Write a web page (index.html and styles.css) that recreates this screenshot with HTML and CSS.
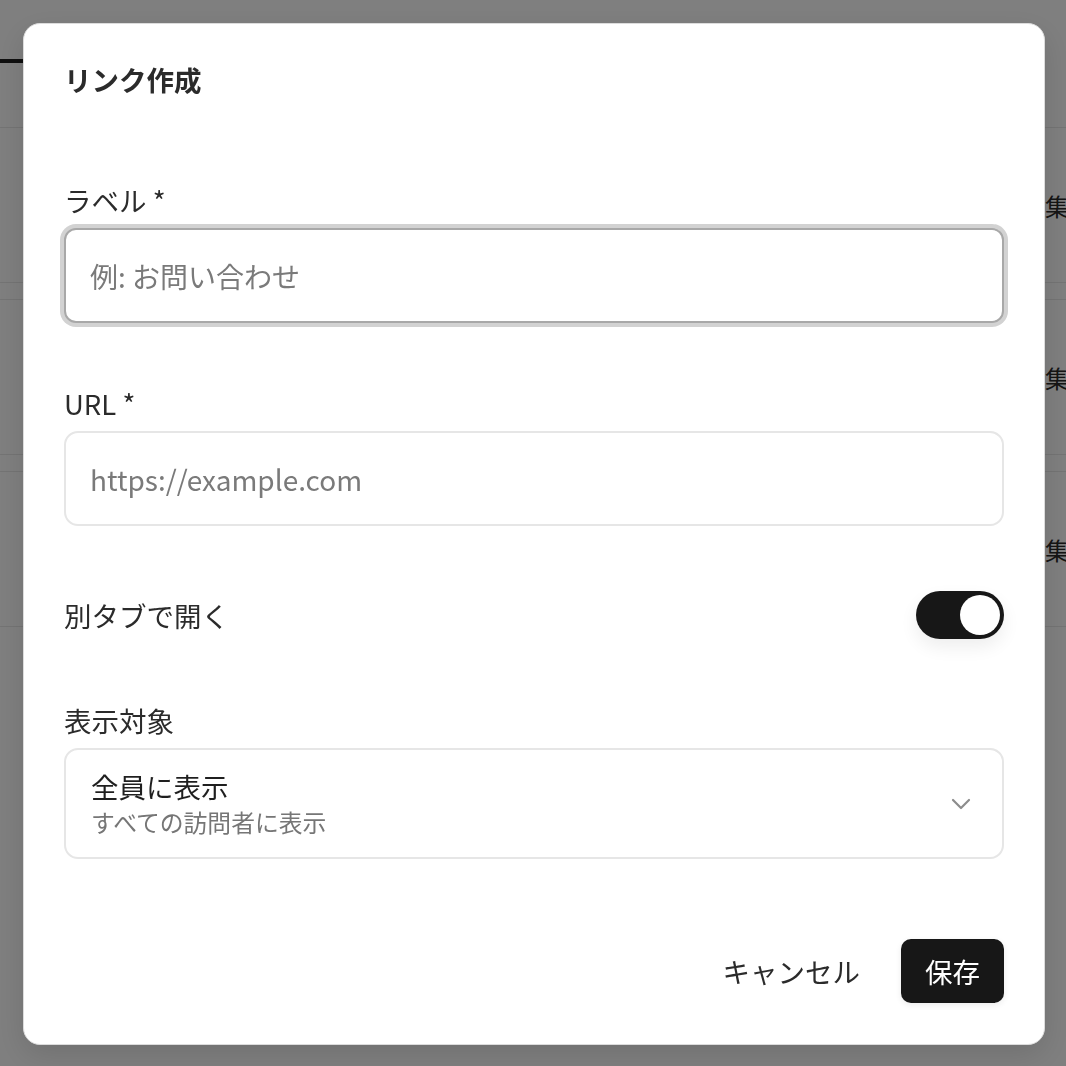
FILE: index.html
```html
<!DOCTYPE html>
<html lang="ja">
<head>
<meta charset="utf-8">
<title>リンク作成</title>
<link rel="stylesheet" href="styles.css">
</head>
<body>
<div class="page">
  <div class="page-header">
    <div class="tab-active"></div>
  </div>
  <div class="rows">
    <div class="row"><span class="row-action">編集</span></div>
    <div class="row"><span class="row-action">編集</span></div>
    <div class="row"><span class="row-action">編集</span></div>
  </div>
</div>

<div class="overlay">
  <div class="modal" role="dialog" aria-labelledby="modal-title">
    <h2 class="modal-title" id="modal-title">リンク作成</h2>
    <form class="form">
      <div class="field field-first">
        <label class="field-label" for="label">ラベル *</label>
        <input class="input input-focus" id="label" type="text" placeholder="例: お問い合わせ">
      </div>
      <div class="field">
        <label class="field-label" for="url">URL *</label>
        <input class="input" id="url" type="text" placeholder="https://example.com">
      </div>
      <div class="toggle-row">
        <span class="toggle-label">別タブで開く</span>
        <span class="toggle"><span class="toggle-knob"></span></span>
      </div>
      <div class="field">
        <span class="field-label">表示対象</span>
        <div class="select">
          <div class="select-text">
            <span class="select-main">全員に表示</span>
            <span class="select-sub">すべての訪問者に表示</span>
          </div>
          <svg class="chevron" width="20" height="12" viewBox="0 0 20 12" fill="none">
            <path d="M2 2 L10 10 L18 2" stroke="#8c8c8c" stroke-width="2.2" stroke-linecap="round" stroke-linejoin="round"/>
          </svg>
        </div>
      </div>
      <div class="footer">
        <button type="button" class="btn btn-ghost">キャンセル</button>
        <button type="button" class="btn btn-primary">保存</button>
      </div>
    </form>
  </div>
</div>
</body>
</html>
```
FILE: styles.css
```css
* { box-sizing: border-box; }

html, body {
  margin: 0;
  padding: 0;
  width: 1066px;
  height: 1066px;
  overflow: hidden;
  font-family: "Noto Sans CJK JP", "Noto Sans", sans-serif;
  color: #1a1a1a;
  background: #ffffff;
}

/* underlying page */
.page {
  width: 1066px;
  height: 1066px;
  overflow: hidden;
  background: #ffffff;
}

.page-header {
  height: 127px;
  padding-top: 59px;
}

.tab-active {
  width: 60px;
  height: 4px;
  background: #1f1f1f;
}

.rows {
  display: flex;
  flex-direction: column;
  gap: 16px;
}

.row {
  height: 156px;
  border-top: 1px solid #e8e8e8;
  border-bottom: 1px solid #e8e8e8;
  display: flex;
  align-items: center;
  justify-content: flex-end;
}

.row-action {
  font-size: 24px;
  color: #2a2a2a;
  margin-right: -3px;
}

/* overlay + modal */
.overlay {
  position: fixed;
  inset: 0;
  background: rgba(0, 0, 0, 0.5);
  padding: 23px 21px 0 23px;
}

.modal {
  width: 1022px;
  height: 1022px;
  background: #ffffff;
  border: 1.5px solid #dcdcdc;
  border-radius: 17px;
  padding: 35px 40px 0 40px;
  box-shadow: 0 10px 30px rgba(0, 0, 0, 0.12);
}

.modal-title {
  margin: 0 0 81px 0;
  font-size: 27.5px;
  line-height: 40px;
  font-weight: 700;
  color: #2b2b2b;
}

.form {
  display: flex;
  flex-direction: column;
}

.field {
  display: flex;
  flex-direction: column;
  margin-bottom: 61px;
}

.field-first {
  margin-bottom: 60px;
}

.field-label {
  font-size: 27.5px;
  line-height: 40px;
  color: #2b2b2b;
  margin-bottom: 8px;
}

.input {
  width: 100%;
  height: 95px;
  border: 2px solid #e6e6e6;
  border-radius: 14px;
  padding: 0 24px;
  font-family: inherit;
  font-size: 28px;
  color: #1a1a1a;
  background: #ffffff;
  outline: none;
}

.input::placeholder {
  color: #7a7a7a;
}

.input-focus {
  border: 2px solid #a8a8a8;
  border-radius: 12px;
  box-shadow: 0 0 0 4px #d2d2d2;
}

.toggle-row {
  display: flex;
  align-items: center;
  justify-content: space-between;
  height: 48px;
  margin-top: 4px;
  margin-bottom: 61px;
}

.toggle-label {
  font-size: 27.5px;
  line-height: 40px;
  color: #2b2b2b;
}

.toggle {
  width: 88px;
  height: 48px;
  border-radius: 24px;
  background: #171717;
  display: flex;
  align-items: center;
  justify-content: flex-end;
  padding: 0 4px;
  box-shadow: 0 8px 18px rgba(0, 0, 0, 0.07);
}

.toggle-knob {
  width: 40px;
  height: 40px;
  border-radius: 50%;
  background: #ffffff;
}

.select {
  height: 111px;
  border: 2px solid #e6e6e6;
  border-radius: 14px;
  padding: 0 31px 0 25px;
  display: flex;
  align-items: center;
  justify-content: space-between;
}

.select-text {
  display: flex;
  flex-direction: column;
}

.select-main {
  font-size: 27.5px;
  line-height: 36px;
  color: #1f1f1f;
}

.select-sub {
  font-size: 23.8px;
  line-height: 36px;
  color: #767676;
}

.chevron {
  display: block;
}

.footer {
  display: flex;
  justify-content: flex-end;
  align-items: center;
  gap: 17px;
  margin-top: 19px;
}

.btn {
  height: 64px;
  border: none;
  border-radius: 10px;
  padding: 0 24px;
  font-family: inherit;
  font-size: 27.5px;
  line-height: 40px;
  cursor: pointer;
}

.btn-ghost {
  background: transparent;
  color: #2b2b2b;
}

.btn-primary {
  background: #171717;
  color: #ffffff;
  box-shadow: 0 2px 6px rgba(0, 0, 0, 0.08);
}
```
